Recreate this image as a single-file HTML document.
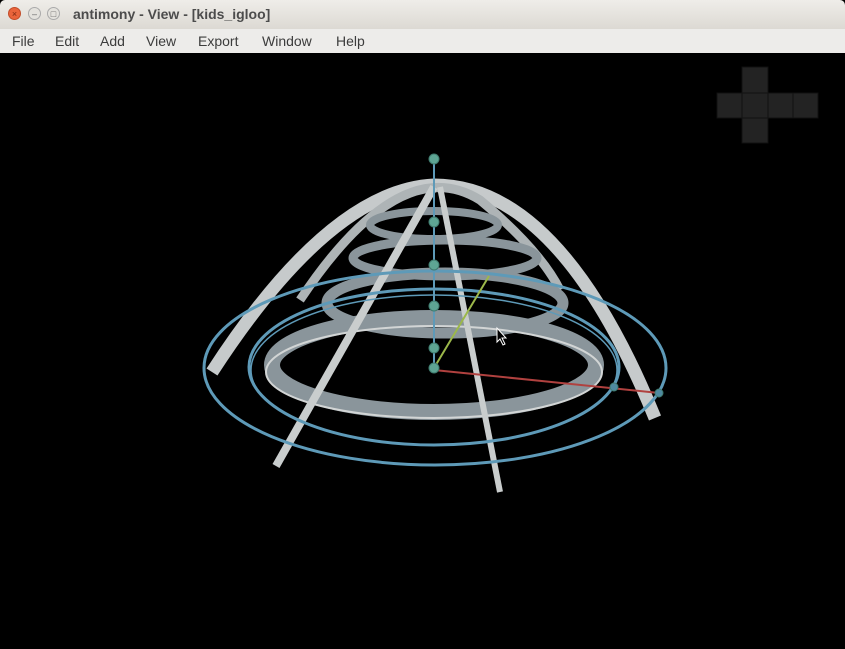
<!DOCTYPE html>
<html><head><style>
body{margin:0;width:845px;height:649px;overflow:hidden;background:#000;font-family:"Liberation Sans","DejaVu Sans",sans-serif}
#title{position:absolute;left:0;top:0;width:845px;height:29px;background:linear-gradient(#efede9,#dcd9d3);border-radius:5px 5px 0 0}
#title .t{position:absolute;left:73px;top:6px;font-size:14px;font-weight:bold;color:#4c4c4c}
.b{position:absolute;top:7px;width:13px;height:13px;border-radius:50%;box-sizing:border-box;font-size:9px;line-height:12px;text-align:center;color:#666}
#menu{position:absolute;left:0;top:29px;width:845px;height:24px;background:#edecea;font-size:14px;color:#3c3c3c}
#menu span{position:absolute;top:4px}
svg{position:absolute;left:0;top:0}
</style></head><body>
<div id="title">
<div class="b" style="left:8px;background:#e9643b;border:1px solid #c24d2a;color:#7a2a12">×</div>
<div class="b" style="left:28px;background:#e4e2dd;border:1px solid #aaa">–</div>
<div class="b" style="left:47px;background:#e4e2dd;border:1px solid #aaa">□</div>
<div class="t">antimony - View - [kids_igloo]</div>
</div>
<div id="menu">
<span style="left:12px">File</span><span style="left:55px">Edit</span><span style="left:100px">Add</span><span style="left:146px">View</span><span style="left:198px">Export</span><span style="left:262px">Window</span><span style="left:336px">Help</span>
</div>
<svg width="845" height="649" viewBox="0 0 845 649">
<g fill="#232323" stroke="#111" stroke-width="1">
<rect x="742" y="67" width="26" height="26"/>
<rect x="717" y="93" width="26" height="25"/><rect x="742" y="93" width="26" height="25"/><rect x="768" y="93" width="25" height="25"/><rect x="793" y="93" width="25" height="25"/>
<rect x="742" y="118" width="26" height="25"/>
</g>
<g fill="none" stroke="#c6cacb" stroke-linecap="butt">
<path d="M212 372 Q330 190 434 185 Q560 185 655 418" stroke-width="13"/>
<path d="M300 300 Q400 150 480 200 Q540 250 560 290" stroke-width="9" stroke="#aeb4b6"/>
</g>
<g fill="none" stroke="#8a959b">
<ellipse cx="434" cy="365" rx="162" ry="47" stroke-width="16"/>
<ellipse cx="445" cy="303" rx="118" ry="30" stroke-width="11"/>
<ellipse cx="445" cy="258" rx="92" ry="18" stroke-width="9"/>
<ellipse cx="434" cy="225" rx="64" ry="14" stroke-width="8"/>
</g>
<g fill="none" stroke="#d2d5d5" stroke-width="2">
<ellipse cx="434" cy="372" rx="168" ry="46"/>
</g>
<g fill="none" stroke="#c9cdcd" stroke-width="8">
<path d="M276 466 L434 187"/>
<path d="M440 187 L500 492" stroke-width="6"/>
</g>
<g fill="none" stroke="#5e9ab8" stroke-width="3">
<ellipse cx="435" cy="368" rx="231" ry="97"/>
<ellipse cx="434" cy="367" rx="185" ry="78"/>
<ellipse cx="434" cy="370" rx="183" ry="75" stroke-width="1.5"/>
</g>
<line x1="434" y1="159" x2="434" y2="368" stroke="#5e9ab8" stroke-width="2"/>
<line x1="434" y1="368" x2="489" y2="276" stroke="#9cb84a" stroke-width="2"/>
<line x1="434" y1="370" x2="659" y2="393" stroke="#b0413f" stroke-width="2"/>
<g fill="#5ea594" stroke="#3f7a6e">
<circle cx="434" cy="159" r="5"/><circle cx="434" cy="222" r="5"/><circle cx="434" cy="265" r="5"/><circle cx="434" cy="306" r="5"/><circle cx="434" cy="348" r="5"/><circle cx="434" cy="368" r="5"/>
<circle cx="614" cy="387" r="4" fill="#4f8aa0"/><circle cx="659" cy="393" r="4" fill="#4f8aa0"/>
</g>
<path d="M497 328 L497 342 L500 339 L503 345 L505 344 L502 338 L506 338 Z" fill="#000" stroke="#fff" stroke-width="1"/>
</svg>
</body></html>
